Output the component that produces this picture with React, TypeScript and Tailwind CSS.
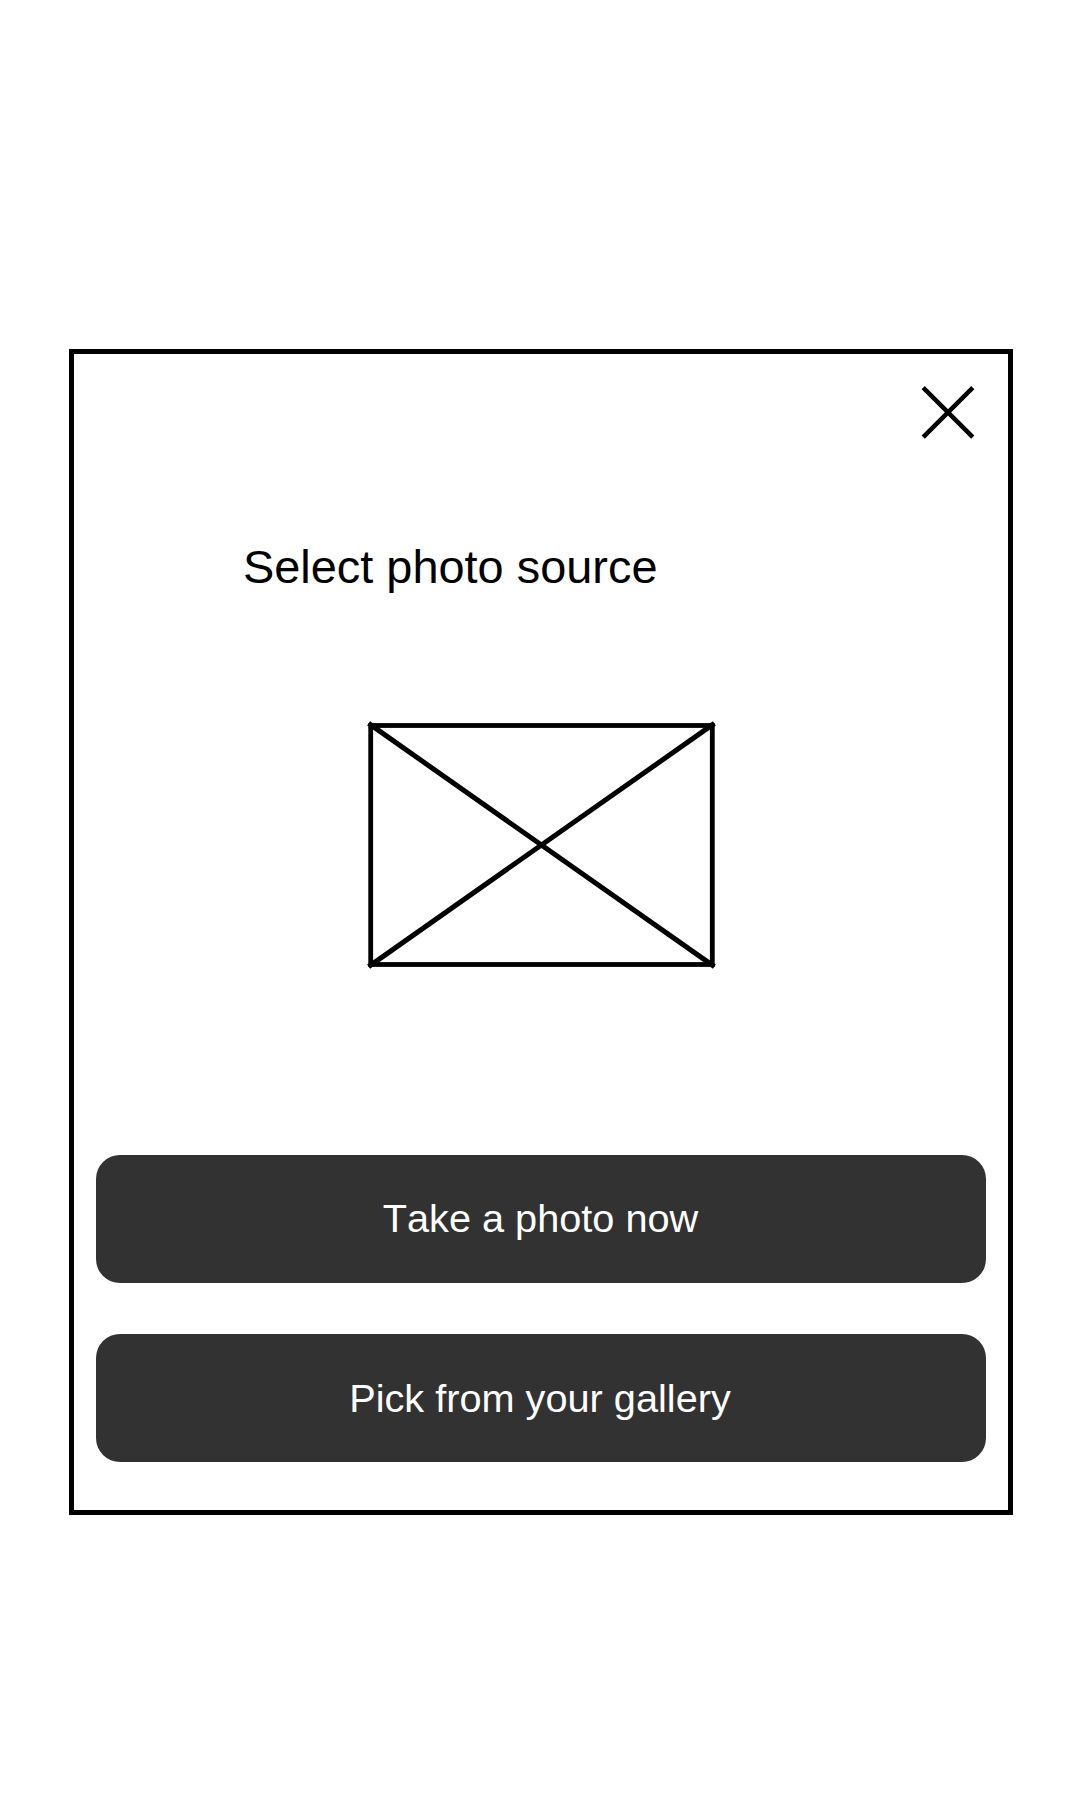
import React from "react";

function CloseIcon() {
  return (
    <svg width="54" height="54" viewBox="0 0 54 54" fill="none" stroke="#000" strokeWidth="4.5">
      <path d="M2.2 2.6L51.8 52.2M51.8 2.6L2.2 52.2" />
    </svg>
  );
}

function ImagePlaceholder() {
  return (
    <svg
      width="352"
      height="250"
      viewBox="0 0 352 250"
      fill="none"
      stroke="#000"
      role="img"
      aria-label="Photo placeholder"
    >
      <rect x="5.7" y="5.5" width="341.6" height="239" strokeWidth="4.8" />
      <path d="M3.6 3.4L349.4 246.6M349.4 3.4L3.6 246.6" strokeWidth="5" />
    </svg>
  );
}

function ActionButton({ label, className }: { label: string; className: string }) {
  return (
    <button
      type="button"
      className={`flex h-32 w-full items-center justify-center rounded-3xl bg-[#323232] text-[39.7px] leading-none whitespace-nowrap text-white [font-kerning:none] ${className}`}
    >
      {label}
    </button>
  );
}

export default function App() {
  return (
    <main className="h-[1800px] w-[1080px] bg-white pt-[349px] pl-[69px] font-['Liberation_Sans',Arial,sans-serif] text-black">
      <section className="flex h-[1166px] w-[944px] flex-col border-5 border-black px-[22px]">
        <div className="flex justify-end pt-[31px] pr-[11px]">
          <button type="button" aria-label="Close">
            <CloseIcon />
          </button>
        </div>
        <h1 className="mt-[98px] ml-[147px] text-[46.9px] leading-[60px] whitespace-nowrap">
          Select photo source
        </h1>
        <div className="mt-[123px] ml-[269px] h-[250px]">
          <ImagePlaceholder />
        </div>
        <div className="mt-[185px] flex flex-col gap-[51px]">
          <ActionButton label="Take a photo now" className="pr-px pb-px" />
          <ActionButton label="Pick from your gallery" className="pt-px pr-[2px]" />
        </div>
      </section>
    </main>
  );
}
